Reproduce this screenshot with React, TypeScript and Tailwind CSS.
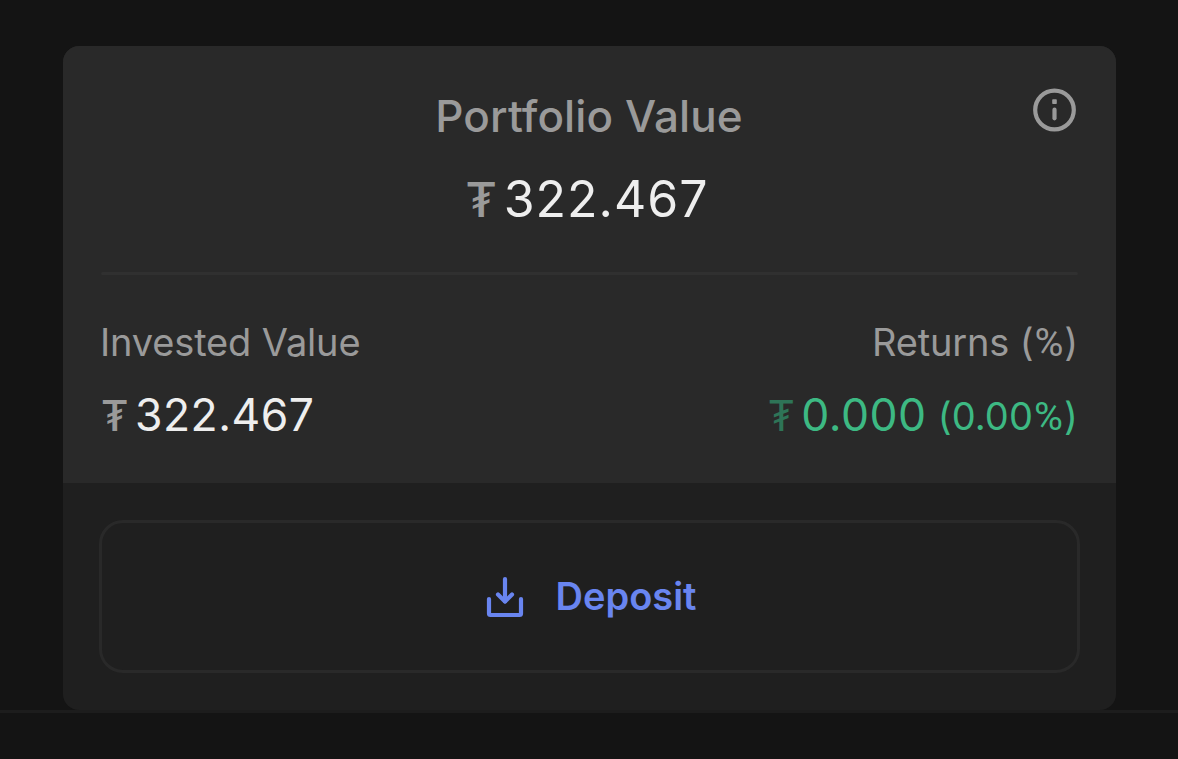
import React from 'react';

interface AmountProps {
  value: string;
  className?: string;
  symbolClassName?: string;
}

const Amount: React.FC<AmountProps> = ({ value, className = '', symbolClassName = '' }) => (
  <div className={`flex items-baseline leading-[60px] whitespace-nowrap ${className}`}>
    <span className={symbolClassName}>₮</span>
    <span>{value}</span>
  </div>
);

// Inter's percent sign is too wide here
const Percent = () => <span className="mx-px font-[Roboto,sans-serif] text-[39.5px]">%</span>;

const InfoIcon = () => (
  <svg width="44" height="44" viewBox="0 0 44 44" fill="none">
    <circle cx="22.5" cy="22" r="19.3" stroke="#9a9a9a" strokeWidth="4.2" />
    <rect x="20.2" y="11.3" width="4.6" height="4.8" rx="0.8" fill="#9a9a9a" />
    <path d="M22.5 21.7V30.3" stroke="#9a9a9a" strokeWidth="4.2" strokeLinecap="round" />
  </svg>
);

const DepositIcon = () => (
  <svg width="38" height="42" viewBox="0 0 38 42" fill="none" stroke="#6985f0" strokeWidth="4.2" strokeLinecap="round" strokeLinejoin="round">
    <path d="M19 3V25.5" />
    <path d="M12 18.5L19 25.5L26 18.5" />
    <path d="M3 23V37.5Q3 39 4.5 39H33.5Q35 39 35 37.5V23" />
  </svg>
);

export default function App() {
  return (
    <div className="h-[759px] w-[1178px] overflow-hidden bg-[#141414] font-[Inter,sans-serif]">
      <div className="h-[713px] border-b-[3px] border-[#1d1d1d] pt-[46px] pl-[63px]">
        <div className="h-[664px] w-[1053px] overflow-hidden rounded-2xl bg-[#1f1f1f]">
          <div className="h-[437px] bg-[#292929] px-[38px]">
            <div className="grid h-[226px] grid-cols-[46px_1fr_46px] items-start">
              <span />
              <div className="flex flex-col items-center">
                <h1 className="mt-[44px] pr-px text-[44px] leading-[52px] font-medium tracking-[0.1px] text-[#9a9a9a]">Portfolio Value</h1>
                <Amount value="322.467" className="mt-[27px] pr-[5px] text-[50px] tracking-[1px] text-[#eeeeee]" symbolClassName="mr-[6px] text-[48px] font-medium text-[#9a9a9a]" />
              </div>
              <div className="mt-[42px]">
                <InfoIcon />
              </div>
            </div>
            <div className="h-[3px] rounded-full bg-[#303030]" />
            <div className="flex justify-between pt-[44px]">
              <div>
                <p className="-ml-px text-[38px] leading-[46px] tracking-[-0.15px] text-[#9a9a9a]">Invested Value</p>
                <Amount value="322.467" className="mt-[20px] text-[44.5px] tracking-[0.5px] text-[#eeeeee]" symbolClassName="mr-[6px] text-[42px] font-medium text-[#9a9a9a]" />
              </div>
              <div className="flex flex-col items-end">
                <p className="h-[46px] text-[38px] leading-[46px] tracking-[-0.15px] text-[#9a9a9a]">
                  Returns (<Percent />)
                </p>
                <div className="mt-[20px] flex h-[60px] items-start text-[#3db983]">
                  <Amount value="0.000" className="text-[44.5px] tracking-[0.5px]" symbolClassName="mr-[6px] text-[42px] text-[#2e7457]" />
                  <span className="ml-[11px] text-[38px] leading-[62px] tracking-[0.1px]">
                    (0.00<Percent />)
                  </span>
                </div>
              </div>
            </div>
          </div>
          <div className="px-[36px] pt-[37px]">
            <button className="flex h-[153px] w-[981px] items-center justify-center gap-[32px] rounded-[24px] border-[3px] border-[#292929] pl-[3px] text-[38px] font-semibold text-[#6985f0]">
              <DepositIcon />
              <span>Deposit</span>
            </button>
          </div>
        </div>
      </div>
    </div>
  );
}
